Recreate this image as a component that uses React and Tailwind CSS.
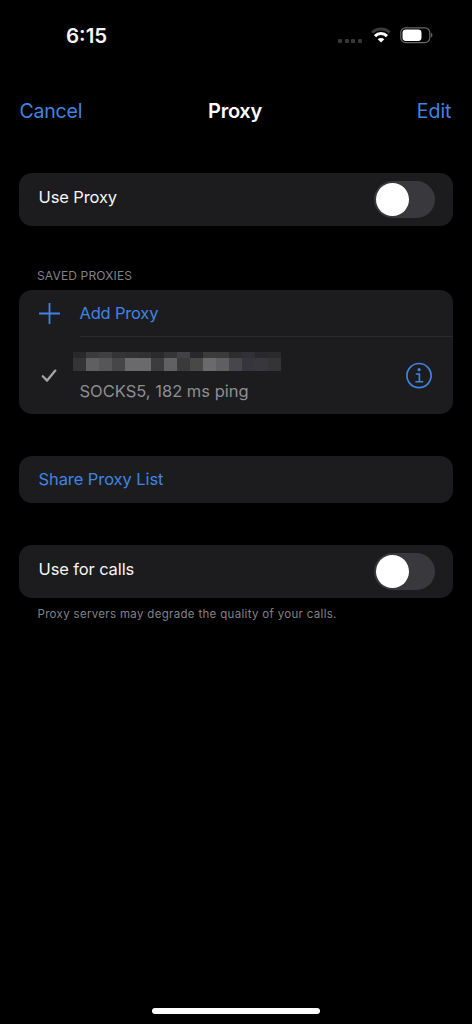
import React, { useState } from "react";

// previews of the blurred server address, one color per tile
const MOSAIC_TOP = [
  "#29292b", "#3b3b3c", "#404042", "#343436", "#323234", "#303031", "#2a2a2c", "#353536",
  "#424244", "#29292b", "#3b3b3c", "#3a3a3b", "#2d2d2f", "#303036", "#28282d", "#2a2a2c",
];
const MOSAIC_BOTTOM = [
  "#343436", "#5f5f61", "#565658", "#464648", "#6a6a6c", "#6a6a6c", "#3c3c3e", "#616163",
  "#3a3a3b", "#484847", "#6a6a6c", "#5f5f61", "#46464b", "#35353b", "#37373d", "#343437",
];

const StatusBar = () => (
  <div className="flex h-[72px] justify-between pl-[66px] pr-[38.5px]">
    <span className="mt-[22px] text-[20.5px] leading-7 font-semibold">
      6:15
    </span>
    <div className="flex pt-[27px]">
      <div className="mt-[12px] mr-[9px] flex h-1 gap-[2.5px]">
        {[0, 1, 2, 3].map((i) => (
          <span key={i} className="size-1 rounded-[1px] bg-[#363638]" />
        ))}
      </div>
      <svg width="20" height="16" viewBox="0 0 20 16" fill="none">
        <path d="M1.2 5.5a12.7 12.7 0 0 1 17.6 0" stroke="#3a3a3c" strokeWidth="3" />
        <path d="M4 9.1a8.4 8.4 0 0 1 12 0" stroke="#fff" strokeWidth="3" />
        <path d="M10 15.6 6.7 12.3a4.7 4.7 0 0 1 6.6 0Z" fill="#fff" />
      </svg>
      <svg className="ml-[9px]" width="34" height="17" viewBox="0 0 34 17" fill="none">
        <rect x="0.8" y="0.8" width="29" height="14.8" rx="4.8" stroke="#68686a" strokeWidth="1.2" />
        <rect x="2.5" y="2.4" width="19" height="11.6" rx="3.4" fill="#fff" />
        <path d="M31.2 5.8c1.5.5 1.5 4.2 0 4.7Z" fill="#77777a" />
      </svg>
    </div>
  </div>
);

const Card = ({ className = "", children }) => (
  <div className={`mx-[19px] w-[434px] rounded-[13px] bg-[#1c1c1e] ${className}`}>
    {children}
  </div>
);

const Switch = ({ checked, onChange, label }) => (
  <button
    role="switch"
    aria-checked={checked}
    aria-label={label}
    onClick={() => onChange(!checked)}
    className={`flex h-[37px] w-[61px] items-center rounded-full p-[2px] ${
      checked ? "justify-end bg-[#34c759]" : "justify-start bg-[#39393d]"
    }`}
  >
    <span className="size-[33px] rounded-full bg-white" />
  </button>
);

const ToggleCard = ({ className, label, checked, onChange }) => (
  <Card className={`flex h-[53px] items-center justify-between pr-[18px] pl-[19.5px] ${className}`}>
    <span className="-mt-[6px] text-[16.5px] leading-6 tracking-[-0.12px]">{label}</span>
    <Switch label={label} checked={checked} onChange={onChange} />
  </Card>
);

const App = () => {
  const [useProxy, setUseProxy] = useState(false);
  const [useForCalls, setUseForCalls] = useState(false);

  return (
    <div className="flex h-[1024px] w-[472px] flex-col overflow-hidden bg-black font-['Inter',sans-serif] text-[#f5f5f5]">
      <StatusBar />

      <header className="flex h-[78px] items-center justify-between px-[19.5px] text-[19.5px]">
        <button className="w-20 pt-px text-left tracking-[-0.2px] text-[#3f84e5]">Cancel</button>
        <h1 className="pr-[2px] text-[20px] font-semibold tracking-[-0.3px] text-white">Proxy</h1>
        <button className="w-20 pt-px pr-px text-right text-[#3f84e5]">Edit</button>
      </header>

      <ToggleCard
        className="mt-[23px]"
        label="Use Proxy"
        checked={useProxy}
        onChange={setUseProxy}
      />

      <h2 className="mt-[41px] ml-[37px] text-[12px] leading-[18px] tracking-[0.15px] text-[#828286]">
        SAVED PROXIES
      </h2>
      <Card className="mt-[5px] flex h-[124px] flex-col">
        <button className="flex h-[46px] items-center text-left">
          <svg className="ml-5" width="21" height="21" viewBox="0 0 21 21" fill="none">
            <path d="M10.5.5v20M.5 10.5h20" stroke="#3f84e5" strokeWidth="1.8" strokeLinecap="round" />
          </svg>
          <span className="ml-[19.5px] text-[16.5px] leading-6 tracking-[-0.2px] text-[#3f84e5]">
            Add Proxy
          </span>
        </button>
        <div className="ml-[61px] h-px bg-[#2a2a2c]" />
        <div className="flex h-[77px] items-center">
          <svg className="ml-[22px]" width="16" height="14" viewBox="0 0 16 14" fill="none">
            <path
              d="m1.8 7.2 4.3 4.4L14.3 1.6"
              stroke="#a5a5a8"
              strokeWidth="2.3"
              strokeLinecap="round"
              strokeLinejoin="round"
            />
          </svg>
          <div className="ml-4 flex flex-1 flex-col pt-[3px]">
            <div className="grid w-[208px] grid-cols-[repeat(16,13px)] grid-rows-[6px_13px]">
              {[...MOSAIC_TOP, ...MOSAIC_BOTTOM].map((color, i) => (
                <span key={i} style={{ backgroundColor: color }} />
              ))}
            </div>
            <span className="mt-[8px] ml-[6.5px] text-[16.5px] leading-6 text-[#8e8e93]">
              SOCKS5, 182 ms ping
            </span>
          </div>
          <button aria-label="Proxy details" className="mr-5">
            <svg width="28" height="28" viewBox="0 0 28 28" fill="none" stroke="#3f84e5">
              <circle cx="14" cy="13.6" r="12.1" strokeWidth="1.7" />
              <circle cx="14.1" cy="7.7" r="1.6" fill="#3f84e5" stroke="none" />
              <path d="M11.4 12h3v7.8M11 19.8h6.6" strokeWidth="1.6" strokeLinecap="round" />
            </svg>
          </button>
        </div>
      </Card>

      <Card className="mt-[42px] flex h-[47px] items-center pb-px pl-[19.5px]">
        <button className="text-[16.5px] leading-6 tracking-[-0.08px] text-[#3f84e5]">
          Share Proxy List
        </button>
      </Card>

      <ToggleCard
        className="mt-[42px]"
        label="Use for calls"
        checked={useForCalls}
        onChange={setUseForCalls}
      />
      <p className="mt-[7px] ml-[37.5px] text-[11.5px] leading-[18px] tracking-[0.32px] text-[#828286]">
        Proxy servers may degrade the quality of your calls.
      </p>

      <div className="mx-auto mt-auto mb-[10px] h-[6px] w-[168px] rounded-full bg-white" />
    </div>
  );
};

export default App;
